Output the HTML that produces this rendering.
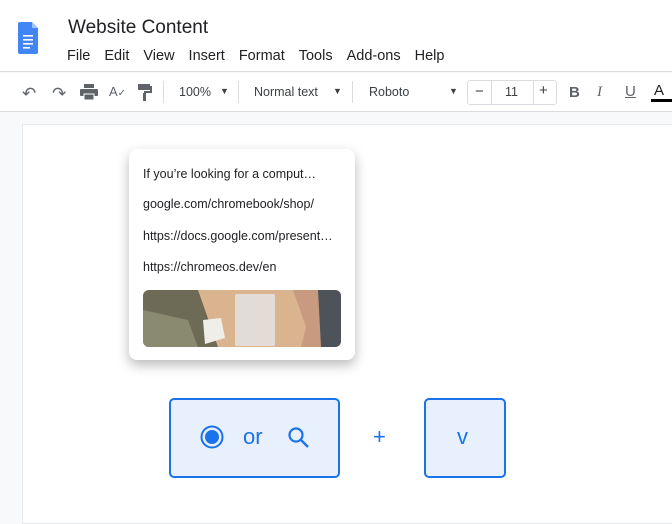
<!DOCTYPE html>
<html><head><style>
*{margin:0;padding:0;box-sizing:border-box}
body{width:672px;height:512px;overflow:hidden;background:#f8f9fa;font-family:"Liberation Sans",Arial,sans-serif;position:relative;color:#202124}
.a{position:absolute}
.hdr{left:0;top:0;width:672px;height:72px;background:#fff;border-bottom:1px solid #dadce0}
.tb{left:0;top:73px;width:672px;height:39px;background:#fff;border-bottom:1px solid #dadce0}
.menu span{margin-right:14px}
.t{font-size:12.5px;color:#3c4043}
.sep{width:1px;height:22px;background:#dadce0;top:81px}
.doc{left:22px;top:124px;width:660px;height:400px;background:#fff;border:1px solid #e8eaed}
.card{left:129px;top:149px;width:226px;height:211px;background:#fff;border-radius:8px;box-shadow:0 5px 12px rgba(0,0,0,.28)}
.card div{position:absolute;left:14px;font-size:12.5px;color:#202124}
.key{border:2px solid #1a73e8;background:#e8f0fe;border-radius:5px}
</style></head><body>
<div class="a hdr"></div>
<svg class="a" style="left:18px;top:22px" width="20" height="36" viewBox="0 0 20 36"><path d="M2 0h12l6 6v24a2 2 0 0 1-2 2H2a2 2 0 0 1-2-2V2a2 2 0 0 1 2-2z" fill="#4285f4"/><path d="M14 0v6h6z" fill="#a1c2fa"/><rect x="5" y="13" width="10" height="1.6" fill="#fff"/><rect x="5" y="17" width="10" height="1.6" fill="#fff"/><rect x="5" y="21" width="10" height="1.6" fill="#fff"/><rect x="5" y="25" width="7" height="1.6" fill="#fff"/></svg>
<div class="a" style="left:68px;top:17px;font-size:19px;color:#202124">Website Content</div>
<div class="a menu" style="left:67px;top:48px;font-size:14.5px;color:#202124"><span>File</span><span>Edit</span><span>View</span><span>Insert</span><span>Format</span><span>Tools</span><span>Add-ons</span><span>Help</span></div>
<div class="a tb"></div>
<div class="a t" style="left:22px;top:84px;font-size:17px;color:#5f6368">↶</div>
<div class="a t" style="left:52px;top:84px;font-size:17px;color:#5f6368">↷</div>
<svg class="a" style="left:80px;top:84px" width="18" height="16"><rect x="4" y="0" width="10" height="4" fill="#5f6368"/><rect x="0" y="5" width="18" height="7" rx="1" fill="#5f6368"/><rect x="4" y="10" width="10" height="6" fill="#5f6368" stroke="#fff"/></svg>
<div class="a t" style="left:109px;top:84px;font-size:13px;color:#5f6368">A<span style="font-size:10px">✓</span></div>
<svg class="a" style="left:138px;top:84px" width="14" height="18"><rect x="0" y="0" width="12" height="6" fill="#5f6368"/><rect x="12" y="2" width="2" height="6" fill="#5f6368"/><rect x="6" y="7" width="8" height="2" fill="#5f6368"/><rect x="5" y="9" width="3" height="8" fill="#5f6368"/></svg>
<div class="a sep" style="left:163px"></div>
<div class="a t" style="left:179px;top:85px">100%</div><div class="a t" style="left:220px;top:86px;font-size:9px">▼</div>
<div class="a sep" style="left:238px"></div>
<div class="a t" style="left:254px;top:85px">Normal text</div><div class="a t" style="left:333px;top:86px;font-size:9px">▼</div>
<div class="a sep" style="left:352px"></div>
<div class="a t" style="left:369px;top:85px">Roboto</div><div class="a t" style="left:449px;top:86px;font-size:9px">▼</div>
<div class="a" style="left:467px;top:80px;width:90px;height:25px;border:1px solid #dadce0;border-radius:3px"></div>
<div class="a" style="left:491px;top:80px;width:1px;height:25px;background:#dadce0"></div>
<div class="a" style="left:533px;top:80px;width:1px;height:25px;background:#dadce0"></div>
<div class="a t" style="left:475px;top:83px;font-size:15px">−</div>
<div class="a t" style="left:505px;top:85px">11</div>
<div class="a t" style="left:539px;top:82px;font-size:15px">+</div>
<div class="a" style="left:569px;top:84px;font-size:15px;font-weight:bold;color:#5f6368">B</div>
<div class="a" style="left:597px;top:84px;font-size:15px;font-style:italic;font-family:'Liberation Serif',serif;color:#5f6368">I</div>
<div class="a" style="left:625px;top:83px;font-size:15px;text-decoration:underline;color:#5f6368">U</div>
<div class="a" style="left:654px;top:82px;font-size:15px;color:#202124">A</div>
<div class="a" style="left:651px;top:99px;width:21px;height:3px;background:#000"></div>
<div class="a doc"></div>
<div class="a card">
<div style="top:18px">If you’re looking for a comput…</div>
<div style="top:48px">google.com/chromebook/shop/</div>
<div style="top:80px">https://docs.google.com/present…</div>
<div style="top:111px">https://chromeos.dev/en</div>
<svg class="a" style="left:14px;top:141px;width:198px;height:57px;border-radius:6px" viewBox="0 0 198 57" preserveAspectRatio="none"><rect width="198" height="57" fill="#d9b48e"/><path d="M0 0h55l20 57H0z" fill="#6d6a55"/><path d="M0 20l45 10 10 27H0z" fill="#8a8a70"/><rect x="92" y="4" width="40" height="52" rx="2" fill="#e3dcd6"/><path d="M60 30l18-2 4 20-20 6z" fill="#f0eee8"/><path d="M150 0h48v57h-40l5-20z" fill="#c89a80"/><path d="M175 0h23v57h-20z" fill="#4d5358"/></svg>
</div>
<div class="a key" style="left:169px;top:398px;width:171px;height:80px"></div>
<svg class="a" style="left:200px;top:425px" width="24" height="24"><circle cx="12" cy="12" r="10.5" fill="none" stroke="#1a73e8" stroke-width="2"/><circle cx="12" cy="12" r="7" fill="#1a73e8"/></svg>
<div class="a" style="left:243px;top:424px;font-size:22px;color:#1a73e8">or</div>
<svg class="a" style="left:287px;top:426px" width="24" height="24"><circle cx="9" cy="9" r="6.5" fill="none" stroke="#1a73e8" stroke-width="2.2"/><path d="M14 14l7 7" stroke="#1a73e8" stroke-width="2.4"/></svg>
<div class="a" style="left:373px;top:424px;font-size:22px;color:#1a73e8">+</div>
<div class="a key" style="left:424px;top:398px;width:82px;height:80px"></div>
<div class="a" style="left:457px;top:424px;font-size:22px;color:#1a73e8">v</div>
</body></html>
